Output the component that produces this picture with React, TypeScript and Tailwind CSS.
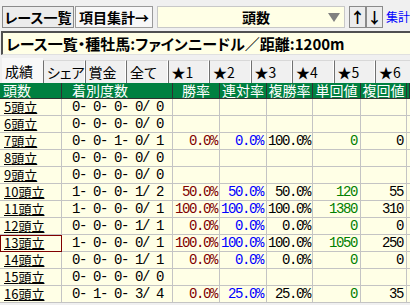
import React from "react";

type Row = [string, string, string, string, string, string, string];

const rows: Row[] = [
  ["5", "0- 0- 0- 0/ 0", "", "", "", "", ""],
  ["6", "0- 0- 0- 0/ 0", "", "", "", "", ""],
  ["7", "0- 0- 1- 0/ 1", "0.0%", "0.0%", "100.0%", "0", "0"],
  ["8", "0- 0- 0- 0/ 0", "", "", "", "", ""],
  ["9", "0- 0- 0- 0/ 0", "", "", "", "", ""],
  ["10", "1- 0- 0- 1/ 2", "50.0%", "50.0%", "50.0%", "120", "55"],
  ["11", "1- 0- 0- 0/ 1", "100.0%", "100.0%", "100.0%", "1380", "310"],
  ["12", "0- 0- 0- 1/ 1", "0.0%", "0.0%", "0.0%", "0", "0"],
  ["13", "1- 0- 0- 0/ 1", "100.0%", "100.0%", "100.0%", "1050", "250"],
  ["14", "0- 0- 0- 1/ 1", "0.0%", "0.0%", "0.0%", "0", "0"],
  ["15", "0- 0- 0- 0/ 0", "", "", "", "", ""],
  ["16", "0- 1- 0- 3/ 4", "0.0%", "25.0%", "25.0%", "0", "35"],
];

const tabs = ["成績", "シェア", "賞金", "全て", "★1", "★2", "★3", "★4", "★5", "★6"];

const jp = "font-['Noto_Sans_CJK_JP',sans-serif] [font-feature-settings:'palt']";
const mono = "font-['Liberation_Mono','Noto_Sans_CJK_JP',monospace] text-[14px] tracking-[-1.4px]";

const cols = "grid grid-cols-[62px_111px_47px_47px_46px_48px_46px_3px]";

export default function App() {
  return (
    <div className={`w-[410px] h-[305px] overflow-hidden bg-[#f0f0f0] text-black ${jp}`}>
      {/* toolbar */}
      <div className="flex items-center h-[31px] pt-[2px] pl-[2px] whitespace-nowrap">
        <div className="shrink-0 h-[22px] w-[72px] flex items-center justify-center border border-[#8a8a8a] bg-[#ececec] text-[14px] font-bold leading-none">
          レース一覧
        </div>
        <div className="shrink-0 ml-[1px] h-[22px] w-[78px] flex items-center justify-center border border-[#9a9a9a] bg-[#f8f8f8] text-[14px] font-bold leading-none">
          項目集計→
        </div>
        <div className="shrink-0 ml-[4px] h-[22px] w-[188px] relative flex items-center justify-center border border-[#c8c8c8] bg-[#ffffe6] text-[14px] font-bold leading-none">
          <span className="ml-[10px]">頭数</span>
          <svg className="absolute right-[4px] top-[6px]" width="12" height="10" viewBox="0 0 12 10">
            <polygon points="0,0 12,0 6,9" fill="#808080" />
          </svg>
        </div>
        <div className="shrink-0 ml-[4px] h-[22px] w-[17px] flex items-center justify-center border border-[#8a8a8a] bg-[#ececec] text-[15px] font-bold leading-none">
          ↑
        </div>
        <div className="shrink-0 h-[22px] w-[17px] flex items-center justify-center border border-[#8a8a8a] bg-[#ececec] text-[15px] font-bold leading-none">
          ↓
        </div>
        <div className="shrink-0 ml-[3px] text-[12px] text-[#0000ff] leading-none">集計</div>
      </div>

      {/* title */}
      <div className="ml-[1px] h-[24px] flex items-center border-t-2 border-l-2 border-[#505050] border-b border-b-[#e0e0e0] bg-[#ffffe6] pl-[3px] text-[15px] font-bold leading-none whitespace-nowrap">
        レース一覧・種牡馬:ファインニードル／距離:1200m
      </div>

      {/* tabs */}
      <div className="flex h-[26px] mt-[2px] pl-[2px] items-end whitespace-nowrap">
        {tabs.map((t, i) => (
          <div
            key={t}
            className={
              i === 0
                ? "shrink-0 w-[41px] h-[25px] flex items-center pl-[3px] text-[14px] leading-none bg-[#f8f8f8]"
                : "shrink-0 w-[41.5px] h-[23px] flex items-center pl-[3px] text-[14px] leading-none bg-[#f0f0f0] border-l border-l-[#707070] border-t border-t-[#d8d8d8] border-r border-r-white"
            }
          >
            {t}
          </div>
        ))}
      </div>

      {/* table */}
      <div className="w-[410px]">
        <div className={`${cols} h-[16px] bg-[#008040] text-white text-[14px] leading-[15px] border-b border-[#303030]`}>
          {[
            ["頭数", "justify-start pl-[3px]"],
            ["着別度数", "justify-start pl-[10px]"],
            ["勝率", "justify-center"],
            ["連対率", "justify-center"],
            ["複勝率", "justify-center"],
            ["単回値", "justify-center"],
            ["複回値", "justify-center"],
            ["", ""],
          ].map(([h, c], i) => (
            <div key={i} className={`flex items-center ${c} border-r border-[#303030]`}>
              {h ? <span className="block h-[15px] leading-[15px]">{h}</span> : null}
            </div>
          ))}
        </div>
        {rows.map((r) => (
          <div key={r[0]} className={`${cols} h-[17px] bg-[#ffffe6]`}>
            <div
              className={`flex items-start pt-[1px] pl-[4px] text-[13px] border-r border-b border-[#c4c4c4] ${
                r[0] === "13" ? "outline outline-1 outline-[#800000] -outline-offset-1" : ""
              }`}
            >
              <span className="block h-[14px] leading-[14px] underline underline-offset-1">{r[0]}頭立</span>
            </div>
            <div className={`flex items-center pl-[10px] whitespace-pre leading-[14px] border-r border-b border-[#c4c4c4] ${mono}`}>
              {r[1]}
            </div>
            <div className={`flex items-center justify-end pr-[2px] leading-[14px] text-[#800000] border-r border-b border-[#c4c4c4] ${mono}`}>
              {r[2]}
            </div>
            <div className={`flex items-center justify-end pr-[3px] leading-[14px] text-[#0000ff] border-r border-b border-[#c4c4c4] ${mono}`}>
              {r[3]}
            </div>
            <div className={`flex items-center justify-end pr-[2px] leading-[14px] text-black border-r border-b border-[#c4c4c4] ${mono}`}>
              {r[4]}
            </div>
            <div className={`flex items-center justify-end pr-[3px] leading-[14px] text-[#008000] border-r border-b border-[#c4c4c4] ${mono}`}>
              {r[5]}
            </div>
            <div className={`flex items-center justify-end pr-[3px] leading-[14px] text-black border-r border-b border-[#c4c4c4] ${mono}`}>
              {r[6]}
            </div>
            <div className="border-b border-[#c4c4c4]"></div>
          </div>
        ))}
      </div>
    </div>
  );
}
